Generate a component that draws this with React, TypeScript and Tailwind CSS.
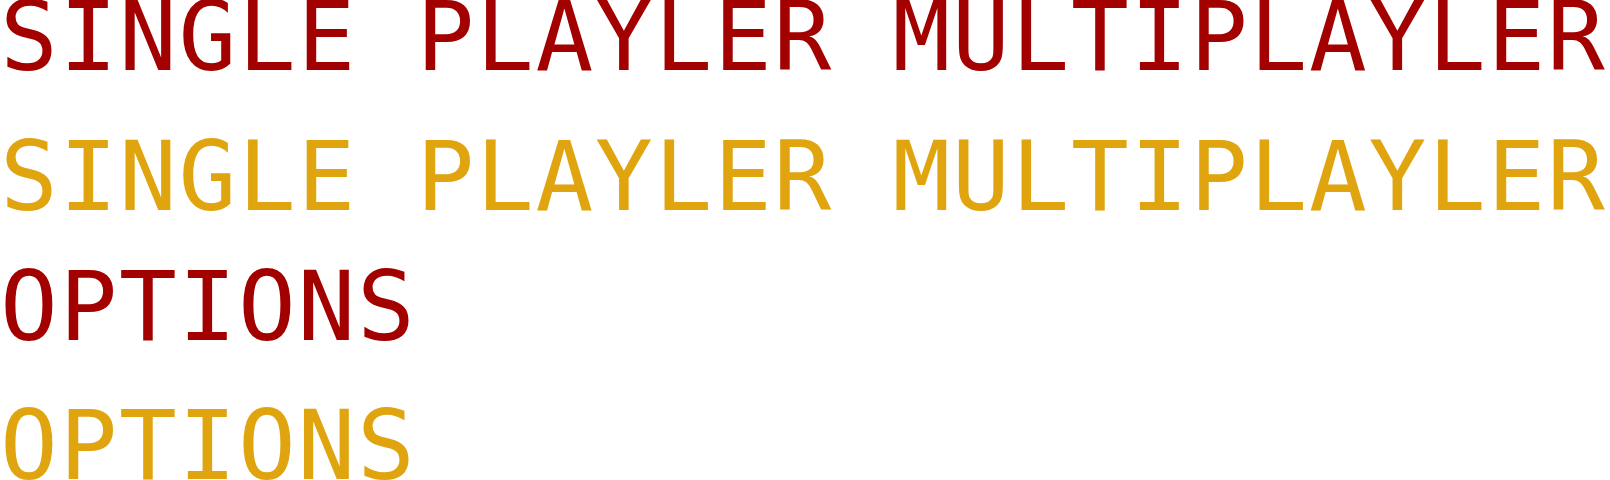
export default function App() {
  const row =
    "whitespace-nowrap text-[96px] tracking-[1.7px] [font-family:'DejaVu_Sans_Mono',monospace]";
  return (
    <div className="w-[1610px] h-[480px] overflow-hidden bg-white flex flex-col">
      <div className={`${row} leading-[74px] text-[#a30000]`}>SINGLE PLAYLER MULTIPLAYLER</div>
      <div className={`${row} leading-[74px] mt-[66px] text-[#e0a40e]`}>SINGLE PLAYLER MULTIPLAYLER</div>
      <div className={`${row} leading-[74px] mt-[56px] text-[#a30000]`}>OPTIONS</div>
      <div className={`${row} leading-[70px] mt-[67px] text-[#e0a40e]`}>OPTIONS</div>
    </div>
  );
}
